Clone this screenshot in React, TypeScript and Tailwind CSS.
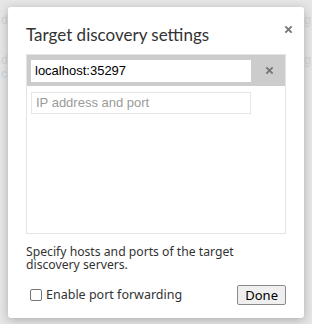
import { useState } from 'react'

const ui = { fontFamily: '"Noto Sans", "DejaVu Sans", sans-serif' }
const title = { fontFamily: 'Lato, "Noto Sans", sans-serif' }
const arial = { fontFamily: '"Liberation Sans", Arial, sans-serif' }

const CloseIcon = ({ className }: { className?: string }) => (
  <svg viewBox="0 0 10 10" className={className}>
    <path d="M1.5 1.5 L8.5 8.5 M8.5 1.5 L1.5 8.5" stroke="currentColor" strokeWidth="2.2" />
  </svg>
)

export default function App() {
  const [targets, setTargets] = useState(['localhost:35297'])
  const [portForwarding, setPortForwarding] = useState(false)

  return (
    <div className="relative w-[312px] h-[324px] overflow-hidden bg-[#e6e6e6]" style={ui}>
      {/* page content behind the overlay */}
      <div
        className="flex flex-col pt-[14px] px-[1px] text-[12px] leading-[13px] text-[#d4d4d4]"
        style={arial}
      >
        <div className="flex justify-between">
          <span>d</span>
          <span>g</span>
        </div>
        <div className="mt-[27px] flex justify-between">
          <span>d</span>
          <span>g</span>
        </div>
        <div className="mt-[1px] text-[#c9d3e6]">ca</div>
      </div>

      <div className="absolute left-[8px] top-[7px] w-[296px] h-[311px] bg-white rounded-[3px] shadow-[0_2px_10px_rgba(0,0,0,0.25)] px-[18px]">
        <button className="absolute right-[11px] top-[18px] w-[9px] h-[9px] text-[#7a7a7a]">
          <CloseIcon className="w-[9px] h-[9px]" />
        </button>

        <h1 className="pt-[17px] text-[17px] leading-[22px] text-[#333]" style={title}>
          Target discovery settings
        </h1>

        <div className="mt-[8px] h-[180px] border border-[#e4e4e4]">
          {targets.map((t, i) => (
            <div key={i} className="flex items-center h-[31px] bg-[#cccccc] px-[4px]">
              <input
                value={t}
                onChange={(e) =>
                  setTargets(targets.map((x, j) => (j === i ? e.target.value : x)))
                }
                className="w-[220px] h-[22px] bg-white px-[4px] text-[13px] text-black outline-none"
                style={arial}
              />
              <button
                onClick={() => setTargets(targets.filter((_, j) => j !== i))}
                className="ml-[14px] w-[10px] h-[10px] text-[#777]"
              >
                <CloseIcon className="w-[9px] h-[9px]" />
              </button>
            </div>
          ))}
          <div className="px-[4px] pt-[3px]">
            <input
              placeholder="IP address and port"
              className="w-[220px] h-[22px] border border-[#e6e6e6] px-[4px] text-[13px] text-black placeholder:text-[#9a9a9a] outline-none"
              style={arial}
            />
          </div>
        </div>

        <p className="mt-[11px] text-[12.2px] leading-[13px] text-[#333]">
          Specify hosts and ports of the target discovery servers.
        </p>

        <div className="mt-[14px] flex items-center justify-between">
          <label className="flex items-center gap-[4px] pl-[4px] text-[12.5px] text-[#333]">
            <input
              type="checkbox"
              checked={portForwarding}
              onChange={(e) => setPortForwarding(e.target.checked)}
              className="appearance-none w-[12px] h-[12px] rounded-[2px] border border-[#767676] bg-white"
            />
            Enable port forwarding
          </label>
          <button className="h-[20px] px-[7px] text-[13px] leading-[18px] text-black bg-[#efefef] border border-[#8a8a8a] rounded-[2px]">
            Done
          </button>
        </div>
      </div>
    </div>
  )
}
